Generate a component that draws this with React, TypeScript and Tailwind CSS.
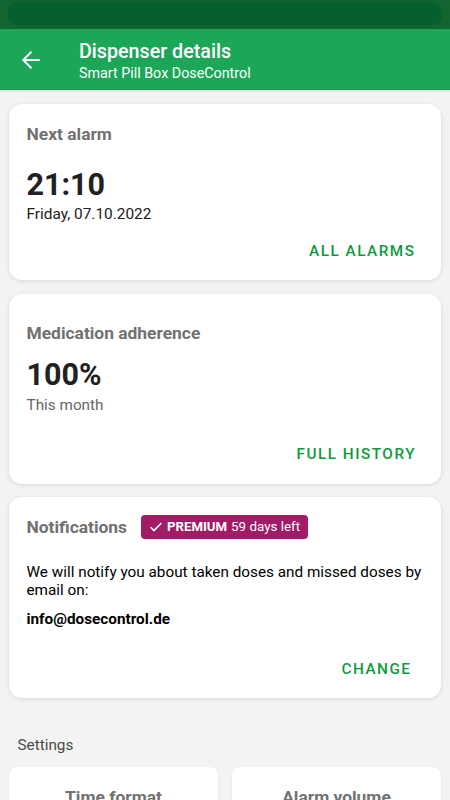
import type { ReactNode } from 'react';

const SETTINGS = ['Time format', 'Alarm volume'];

function Card({ className, children }: { className: string; children: ReactNode }) {
  return (
    <section
      className={`flex flex-col shrink-0 rounded-[13px] bg-white pl-[17.5px] shadow-[0_1px_4px_rgba(0,0,0,0.12)] ${className}`}
    >
      {children}
    </section>
  );
}

function CardTitle({ children }: { children: ReactNode }) {
  return <h2 className="text-[17.4px] leading-5 font-bold text-[#717171]">{children}</h2>;
}

function CardAction({ className, children }: { className: string; children: ReactNode }) {
  return (
    <button
      className={`self-end text-[15.3px] leading-5 font-medium tracking-[1.5px] text-[#0f9a3c] ${className}`}
    >
      {children}
    </button>
  );
}

export default function App() {
  return (
    <div className="h-screen overflow-hidden flex flex-col bg-[#f3f3f3] font-[Roboto,sans-serif] text-[15.3px] leading-[18px] text-[#212121]">
      {/* Status bar */}
      <div className="h-[29px] shrink-0 bg-[#12652f] px-2 pt-[2px]">
        <div className="h-[23px] rounded-[9px] bg-[#05602d]" />
      </div>

      {/* App bar */}
      <header className="h-[61px] shrink-0 flex bg-[#1ba658] text-white border-b border-[#2d9159] shadow-[0_1px_2px_rgba(0,0,0,0.15)]">
        <button className="w-[79px] pl-[21px] pt-px" aria-label="Back">
          <svg width="20" height="20" viewBox="0 0 20 20" fill="none" stroke="currentColor" strokeWidth="2">
            <path d="M18.7 10H2.3M10.4 1.8L2.2 10L10.4 18.2" />
          </svg>
        </button>
        <div className="pt-[11px]">
          <h1 className="text-[19.7px] leading-6 font-medium">Dispenser details</h1>
          <p className="text-[14.3px]">Smart Pill Box DoseControl</p>
        </div>
      </header>

      <main className="flex-1 flex flex-col px-[9px] pt-[14px]">
        {/* Next alarm */}
        <Card className="h-[176px] pt-5">
          <CardTitle>Next alarm</CardTitle>
          <p className="mt-[23px] text-[30.5px] leading-9 font-bold">21:10</p>
          <p className="mt-[2px] text-[15.4px]">Friday, 07.10.2022</p>
          <CardAction className="mt-[18px] mr-[25.5px]">ALL ALARMS</CardAction>
        </Card>

        {/* Adherence */}
        <Card className="mt-[14px] h-[190px] pt-[29px]">
          <CardTitle>Medication adherence</CardTitle>
          <p className="mt-[14px] text-[30.5px] leading-9 font-bold">100%</p>
          <p className="mt-[3px] text-[#666]">This month</p>
          <CardAction className="mt-[30px] mr-[25px]">FULL HISTORY</CardAction>
        </Card>

        {/* Notifications */}
        <Card className="mt-[13px] h-[201px] pt-[18px]">
          <div className="flex items-center">
            <CardTitle>Notifications</CardTitle>
            <span className="ml-[14px] h-6 w-[167px] flex items-center rounded-[4px] bg-[#a31a66] pl-[9px] text-[13.4px] text-white whitespace-nowrap">
              <svg width="12" height="10" viewBox="0 0 12 10" fill="none" stroke="currentColor" strokeWidth="1.6">
                <path d="M0.7 5.2L4 8.5L11.4 1" />
              </svg>
              <b className="ml-[5px] text-[13.2px] font-bold">PREMIUM</b>
              <span className="ml-[4px]">59 days left</span>
            </span>
          </div>
          <p className="mt-6 text-black">
            We will notify you about taken doses and missed doses by
            <br />
            email on:
          </p>
          <p className="mt-[11px] font-bold text-black">info@dosecontrol.de</p>
          <CardAction className="mt-[31px] mr-[29.5px]">CHANGE</CardAction>
        </Card>

        {/* Settings */}
        <h3 className="mt-[38px] ml-[8.5px] text-[#4a4a4a]">Settings</h3>
        <div className="mt-[13px] grid grid-cols-2 gap-[14px]">
          {SETTINGS.map((name) => (
            <div
              key={name}
              className="h-[120px] rounded-[8px] bg-white pt-5 text-center shadow-[0_1px_3px_rgba(0,0,0,0.08)]"
            >
              <CardTitle>{name}</CardTitle>
            </div>
          ))}
        </div>
      </main>
    </div>
  );
}
